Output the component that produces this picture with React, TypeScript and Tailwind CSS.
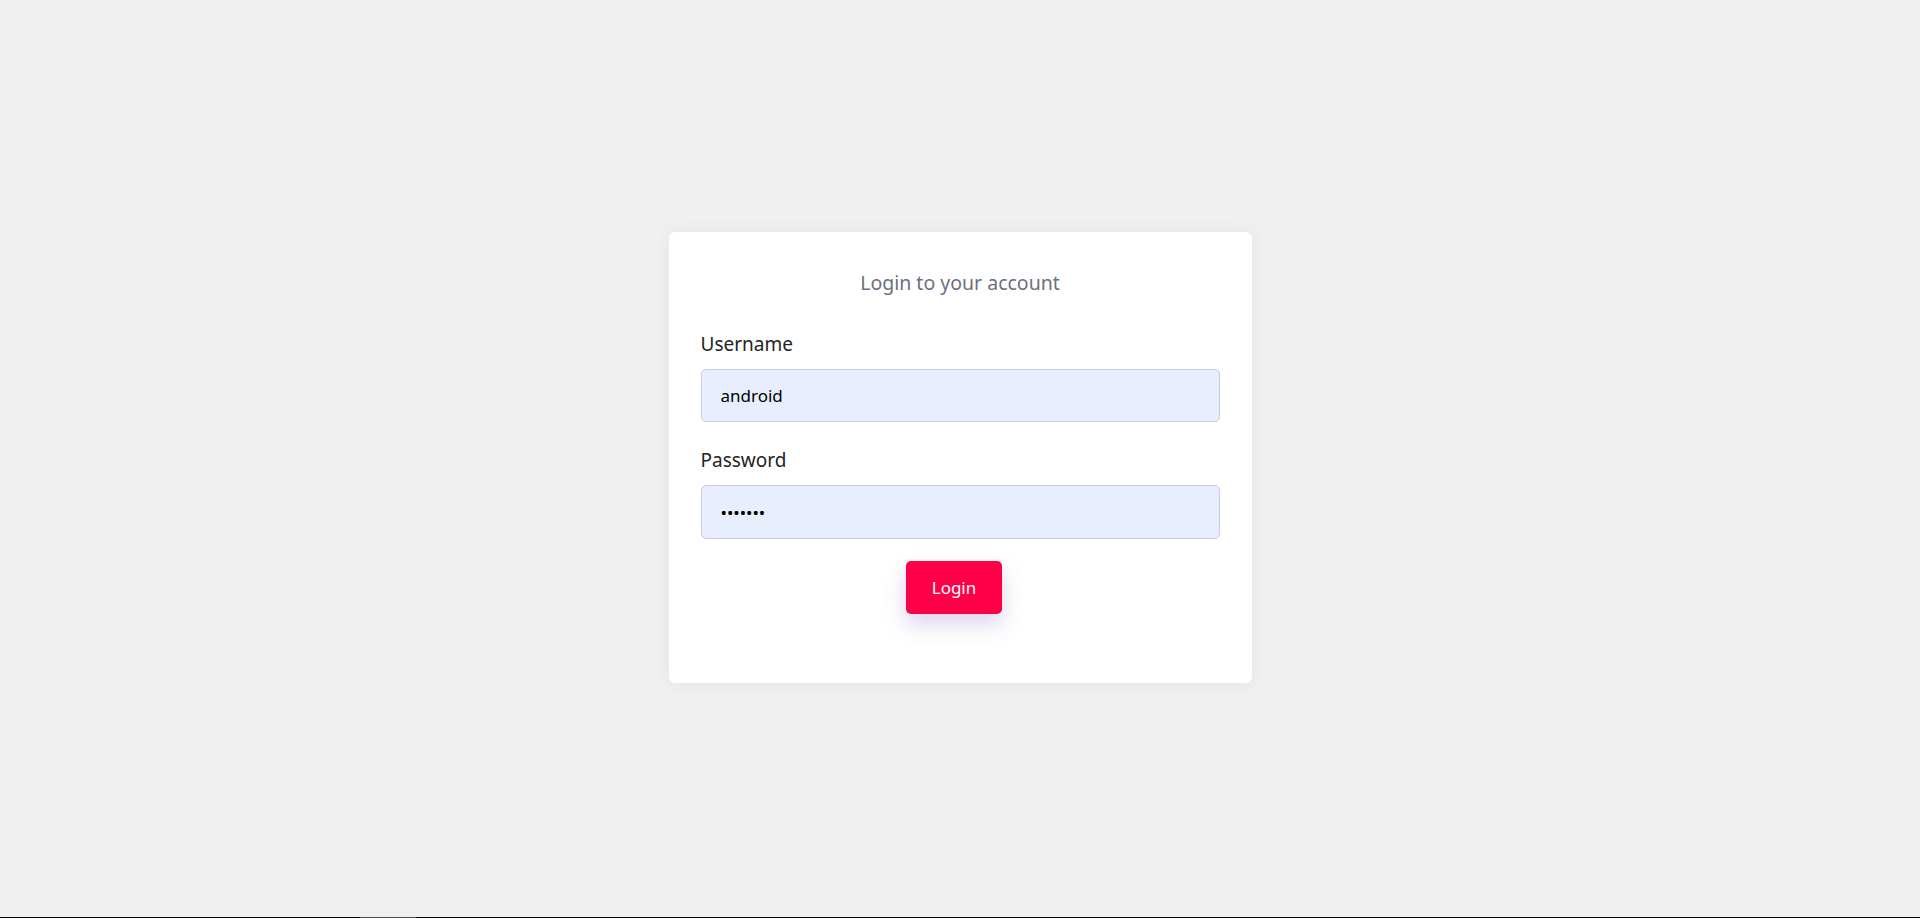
import React from "react";

export default function App() {
  return (
    <div
      className="w-full h-[918px] flex flex-col bg-[#f0f0f0]"
      style={{ fontFamily: '"Noto Sans", "Open Sans", sans-serif' }}
    >
      <div className="flex-1 flex items-center justify-center pb-[2px]">
        <div className="w-[583px] h-[451px] bg-white rounded-[6px] shadow-[0_0_18px_rgba(0,0,0,0.06)] px-8 pt-[37px] flex flex-col">
          <h1 className="text-center text-[19.5px] leading-[28px] text-[#6c717d] font-normal">
            Login to your account
          </h1>
          <label className="mt-[34px] text-[19px] leading-[26px] text-[#222426]">Username</label>
          <input
            type="text"
            defaultValue="android"
            className="mt-[12px] h-[53px] w-full rounded-[5px] border border-[#c6cce0] bg-[#e8eefd] pl-[19px] text-[17px] text-black outline-none"
          />
          <label className="mt-[25px] text-[19px] leading-[26px] text-[#222426]">Password</label>
          <input
            type="password"
            defaultValue="android"
            className="mt-[12px] h-[54px] w-full rounded-[5px] border border-[#c6cce0] bg-[#e8eefd] pl-[19px] text-[17px] text-black outline-none"
          />
          <div className="mt-[22px] flex justify-center">
            <button className="mr-[12px] w-[96px] h-[53px] rounded-[5px] bg-[#ff0048] text-white text-[17px] shadow-[0_10px_22px_rgba(90,60,160,0.22)]">
              Login
            </button>
          </div>
        </div>
      </div>
      <div className="h-px w-full bg-black flex">
        <div className="ml-[360px] w-[56px] h-px bg-[#4a4a4a]" />
      </div>
    </div>
  );
}
